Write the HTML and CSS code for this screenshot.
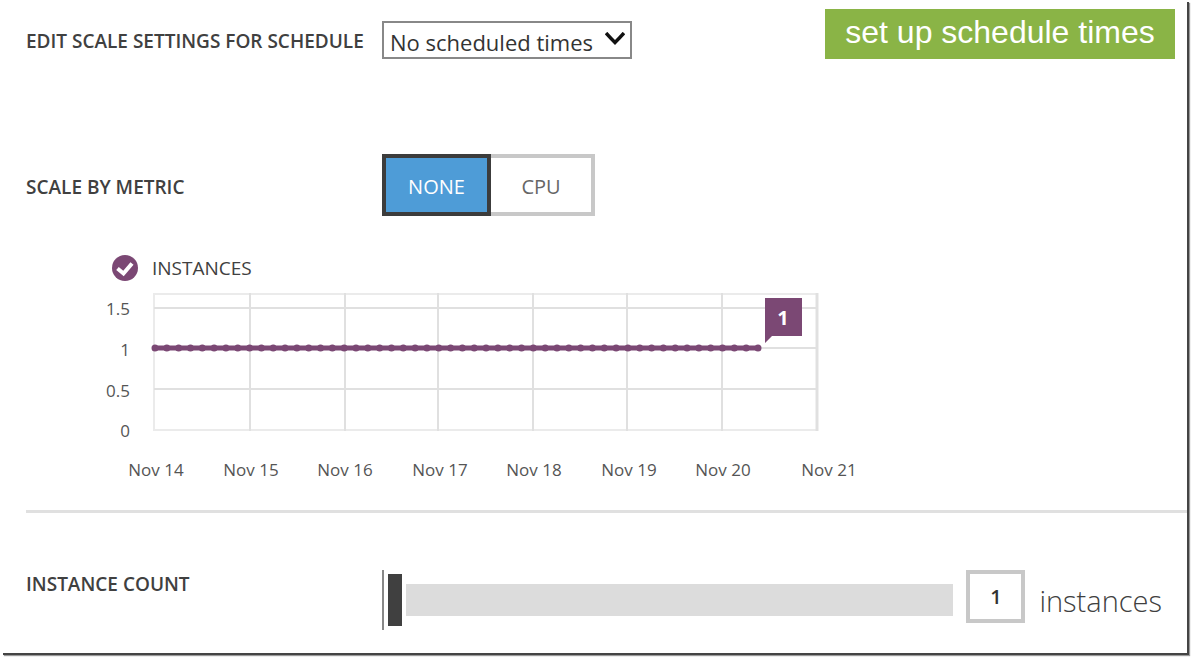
FILE: index.html
```html
<!DOCTYPE html>
<html lang="en">
<head>
  <meta charset="utf-8">
  <title>Scale</title>
  <link rel="stylesheet" href="styles.css">
</head>
<body>
  <main class="panel">
    <div class="row schedule-row">
      <label class="row-label" for="schedule">EDIT SCALE SETTINGS FOR SCHEDULE</label>
      <div class="select-box">
        <select id="schedule">
          <option>No scheduled times</option>
        </select>
        <svg class="chevron" viewBox="0 0 20 14" width="20" height="14">
          <path d="M1 1 Q5 5.500 10 10.500 Q15 5.500 19 1" fill="none" stroke="#111" stroke-width="3.500"/>
        </svg>
      </div>
      <button class="setup-btn" type="button">set up schedule times</button>
    </div>

    <div class="row metric-row">
      <span class="row-label" id="metricLabel">SCALE BY METRIC</span>
      <div class="toggle" role="group" aria-labelledby="metricLabel">
        <button class="toggle-btn selected" type="button">NONE</button>
        <button class="toggle-btn" type="button">CPU</button>
      </div>
    </div>

    <section class="chart">
      <label class="legend">
        <span class="check">
          <input type="checkbox" checked>
          <svg viewBox="0 0 26 26" width="26" height="26">
            <path d="M5.500 13.500 L11.500 18.500 L20 8.500" fill="none" stroke="#fff" stroke-width="4"/>
          </svg>
        </span>
        INSTANCES
      </label>
      <svg class="plot" viewBox="0 0 780 200" width="780" height="200">
        <g class="grid-light">
          <path d="M64 9 H728 M64 145 H728 M64 8 V146"/>
        </g>
        <g class="grid">
          <path d="M64 23 H728 M64 63 H728 M64 104 H728"/>
          <path d="M160 8 V146 M255 8 V146 M348 8 V146 M443 8 V146 M537 8 V146 M632 8 V146"/>
        </g>
        <path class="grid-end" d="M727 8 V146"/>
        <g class="y-axis">
          <text x="40" y="30">1.5</text>
          <text x="40" y="71">1</text>
          <text x="40" y="112">0.5</text>
          <text x="40" y="152">0</text>
        </g>
        <g class="x-axis">
          <text x="66" y="191">Nov 14</text>
          <text x="161" y="191">Nov 15</text>
          <text x="255" y="191">Nov 16</text>
          <text x="350" y="191">Nov 17</text>
          <text x="444" y="191">Nov 18</text>
          <text x="539" y="191">Nov 19</text>
          <text x="633" y="191">Nov 20</text>
          <text x="739" y="191">Nov 21</text>
        </g>
        <path class="series" d="M65 63 H668"/>
        <path class="points" d="M65 63 H668" pathLength="51"/>
        <path class="flag" d="M675 13 H712 V51 H682 L675 58 Z"/>
        <text class="flag-text" x="693" y="40">1</text>
      </svg>
    </section>

    <hr class="divider">

    <div class="row count-row">
      <label class="row-label" for="count">INSTANCE COUNT</label>
      <div class="slider">
        <input type="range" id="count" min="1" max="10" value="1">
      </div>
      <input class="count-box" type="text" id="countBox" value="1" aria-label="Instances">
      <label class="unit" for="countBox">instances</label>
    </div>
  </main>

  <script>
    const slider = document.getElementById('count');
    const box = document.getElementById('countBox');
    slider.addEventListener('input', function() {
      box.value = slider.value;
    });
    box.addEventListener('change', function() {
      slider.value = box.value;
    });
  </script>
</body>
</html>
```
FILE: styles.css
```css
* { box-sizing: border-box; }
body {
  margin: 0;
  background: #fff;
  font-family: "Open Sans", "Noto Sans", sans-serif;
  color: #404040;
}
button, input, select { font-family: inherit; }
.panel {
  margin: 2px 2px 2px 3px;
  padding: 7px 0 23px 23px;
  border-right: 2px solid #444;
  border-bottom: 2px solid #444;
  box-shadow: 1px 1px 1px #999;
}
.row { display: flex; }
.row-label {
  flex: 0 0 356px;
  font-size: 19px;
  line-height: 24px;
  font-weight: 600;
  white-space: nowrap;
}

/* schedule */
.schedule-row {
  align-items: flex-end;
  padding-right: 12px;
}
.schedule-row .row-label { padding-bottom: 6px; }
.select-box {
  position: relative;
  width: 250px;
}
.select-box select {
  appearance: none;
  display: block;
  width: 100%;
  height: 38px;
  padding: 3px 0 0 6px;
  border: 2px solid #888;
  border-radius: 0;
  background: #fff;
  color: #333;
  font-size: 22px;
}
.chevron {
  position: absolute;
  top: 11px;
  right: 7px;
  pointer-events: none;
}
.setup-btn {
  margin-left: auto;
  width: 350px;
  height: 50px;
  padding: 0 0 4px;
  border: none;
  background: #8ab446;
  color: #fff;
  font-family: "Liberation Sans", Arial, sans-serif;
  font-size: 32px;
}

/* metric */
.metric-row {
  align-items: center;
  margin-top: 95px;
}
.metric-row .row-label { padding-top: 4px; }
.toggle { display: flex; }
.toggle-btn {
  width: 104px;
  height: 62px;
  padding: 2px 0 0;
  border: 4px solid #c8c8c8;
  border-left: none;
  background: #fff;
  color: #666;
  font-size: 20px;
}
.toggle-btn.selected {
  width: 109px;
  border: 4px solid #3c3c3c;
  background: #4e9cd7;
  color: #fff;
}

/* chart */
.chart {
  margin-top: 38px;
  padding-left: 64px;
}
.legend {
  display: flex;
  align-items: center;
  gap: 14px;
  margin-left: 22px;
  font-size: 19px;
  line-height: 28px;
}
.check {
  display: grid;
  width: 26px;
  height: 26px;
}
.check input, .check svg { grid-area: 1 / 1; }
.check input {
  appearance: none;
  width: 26px;
  height: 26px;
  margin: 0;
  border-radius: 50%;
  background: #7b4874;
}
.check svg { pointer-events: none; z-index: 1; }
.check input:not(:checked) + svg { visibility: hidden; }
.plot {
  display: block;
  margin-top: 3px;
}
.plot text {
  font-size: 17px;
  fill: #555;
}
.grid-light { stroke: #ebebeb; stroke-width: 2; }
.grid { stroke: #e0e0e0; stroke-width: 2; }
.grid-end { stroke: #e0e0e0; stroke-width: 3; }
.y-axis { text-anchor: end; }
.x-axis { text-anchor: middle; }
.series { stroke: #7b4874; stroke-width: 5; }
.points {
  stroke: #7b4874;
  stroke-width: 7;
  stroke-linecap: round;
  stroke-dasharray: 0 1;
}
.flag { fill: #7b4874; }
.plot .flag-text {
  fill: #fff;
  font-size: 20px;
  font-weight: 700;
  text-anchor: middle;
}

.divider {
  height: 3px;
  margin: 25px 0 57px;
  border: none;
  background: #e0e0e0;
}

/* instance count */
.count-row { padding-right: 25px; }
.count-row .row-label { padding-top: 2px; }
.slider {
  flex: 1;
  display: flex;
  align-items: center;
  height: 60px;
  padding-left: 4px;
  border-left: 2px solid #888;
}
.slider input {
  appearance: none;
  width: 100%;
  height: 52px;
  margin: 0;
  background: none;
}
.slider input::-webkit-slider-runnable-track {
  height: 32px;
  background: #dcdcdc;
}
.slider input::-webkit-slider-thumb {
  appearance: none;
  width: 14px;
  height: 52px;
  margin-top: -10px;
  background: #404040;
  box-shadow: 4px 0 0 #fff;
}
.count-box {
  width: 59px;
  height: 53px;
  margin-left: 13px;
  padding: 0;
  border: 4px solid #c8c8c8;
  color: #333;
  font-size: 20px;
  font-weight: 600;
  text-align: center;
}
.unit {
  margin-left: 14px;
  padding-top: 10px;
  font-size: 29px;
  line-height: 42px;
  font-weight: 300;
}
```
